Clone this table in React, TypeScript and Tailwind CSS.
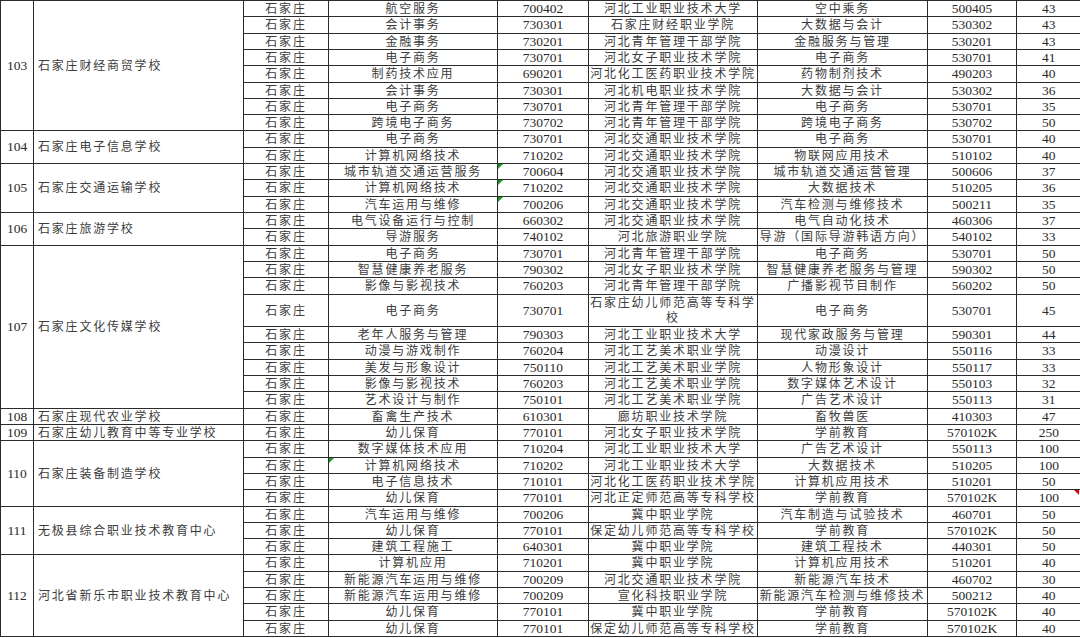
import React from 'react';

type Row = [string, string, string, string, string, string];
type Group = { no: string; name: string; rows: Row[] };

const groups: Group[] = [
  {
    no: '103',
    name: '石家庄财经商贸学校',
    rows: [
      ['航空服务', '700402', '河北工业职业技术大学', '空中乘务', '500405', '43'],
      ['会计事务', '730301', '石家庄财经职业学院', '大数据与会计', '530302', '43'],
      ['金融事务', '730201', '河北青年管理干部学院', '金融服务与管理', '530201', '43'],
      ['电子商务', '730701', '河北女子职业技术学院', '电子商务', '530701', '41'],
      ['制药技术应用', '690201', '河北化工医药职业技术学院', '药物制剂技术', '490203', '40'],
      ['会计事务', '730301', '河北机电职业技术学院', '大数据与会计', '530302', '36'],
      ['电子商务', '730701', '河北青年管理干部学院', '电子商务', '530701', '35'],
      ['跨境电子商务', '730702', '河北青年管理干部学院', '跨境电子商务', '530702', '50'],
    ],
  },
  {
    no: '104',
    name: '石家庄电子信息学校',
    rows: [
      ['电子商务', '730701', '河北交通职业技术学院', '电子商务', '530701', '40'],
      ['计算机网络技术', '710202', '河北交通职业技术学院', '物联网应用技术', '510102', '40'],
    ],
  },
  {
    no: '105',
    name: '石家庄交通运输学校',
    rows: [
      ['城市轨道交通运营服务', '700604', '河北交通职业技术学院', '城市轨道交通运营管理', '500606', '37'],
      ['计算机网络技术', '710202', '河北交通职业技术学院', '大数据技术', '510205', '36'],
      ['汽车运用与维修', '700206', '河北交通职业技术学院', '汽车检测与维修技术', '500211', '35'],
    ],
  },
  {
    no: '106',
    name: '石家庄旅游学校',
    rows: [
      ['电气设备运行与控制', '660302', '河北交通职业技术学院', '电气自动化技术', '460306', '37'],
      ['导游服务', '740102', '河北旅游职业学院', '导游（国际导游韩语方向）', '540102', '33'],
    ],
  },
  {
    no: '107',
    name: '石家庄文化传媒学校',
    rows: [
      ['电子商务', '730701', '河北青年管理干部学院', '电子商务', '530701', '50'],
      ['智慧健康养老服务', '790302', '河北女子职业技术学院', '智慧健康养老服务与管理', '590302', '50'],
      ['影像与影视技术', '760203', '河北青年管理干部学院', '广播影视节目制作', '560202', '50'],
      ['电子商务', '730701', '石家庄幼儿师范高等专科学校', '电子商务', '530701', '45'],
      ['老年人服务与管理', '790303', '河北工业职业技术大学', '现代家政服务与管理', '590301', '44'],
      ['动漫与游戏制作', '760204', '河北工艺美术职业学院', '动漫设计', '550116', '33'],
      ['美发与形象设计', '750110', '河北工艺美术职业学院', '人物形象设计', '550117', '33'],
      ['影像与影视技术', '760203', '河北工艺美术职业学院', '数字媒体艺术设计', '550103', '32'],
      ['艺术设计与制作', '750101', '河北工艺美术职业学院', '广告艺术设计', '550113', '31'],
    ],
  },
  {
    no: '108',
    name: '石家庄现代农业学校',
    rows: [['畜禽生产技术', '610301', '廊坊职业技术学院', '畜牧兽医', '410303', '47']],
  },
  {
    no: '109',
    name: '石家庄幼儿教育中等专业学校',
    rows: [['幼儿保育', '770101', '河北女子职业技术学院', '学前教育', '570102K', '250']],
  },
  {
    no: '110',
    name: '石家庄装备制造学校',
    rows: [
      ['数字媒体技术应用', '710204', '河北工业职业技术大学', '广告艺术设计', '550113', '100'],
      ['计算机网络技术', '710202', '河北工业职业技术大学', '大数据技术', '510205', '100'],
      ['电子信息技术', '710101', '河北化工医药职业技术学院', '计算机应用技术', '510201', '50'],
      ['幼儿保育', '770101', '河北正定师范高等专科学校', '学前教育', '570102K', '100'],
    ],
  },
  {
    no: '111',
    name: '无极县综合职业技术教育中心',
    rows: [
      ['汽车运用与维修', '700206', '冀中职业学院', '汽车制造与试验技术', '460701', '50'],
      ['幼儿保育', '770101', '保定幼儿师范高等专科学校', '学前教育', '570102K', '50'],
      ['建筑工程施工', '640301', '冀中职业学院', '建筑工程技术', '440301', '50'],
    ],
  },
  {
    no: '112',
    name: '河北省新乐市职业技术教育中心',
    rows: [
      ['计算机应用', '710201', '冀中职业学院', '计算机应用技术', '510201', '40'],
      ['新能源汽车运用与维修', '700209', '河北交通职业技术学院', '新能源汽车技术', '460702', '30'],
      ['新能源汽车运用与维修', '700209', '宣化科技职业学院', '新能源汽车检测与维修技术', '500212', '40'],
      ['幼儿保育', '770101', '冀中职业学院', '学前教育', '570102K', '40'],
      ['幼儿保育', '770101', '保定幼儿师范高等专科学校', '学前教育', '570102K', '40'],
    ],
  },
];

// Excel note markers, keyed by row index over the whole sheet
const greenCode = new Set([10, 11, 12]);
const greenMajor = new Set([27]);
const redNum = new Set([29]);
const tallRow = 18;

const heightClass: Record<number, string> = {
  15: 'h-[15px]',
  16: 'h-[16px]',
  17: 'h-[17px]',
  32: 'h-[32px]',
  33: 'h-[33px]',
};

const UNIT = 636 / 39;
const cell = 'border border-[#2b2b2b] p-0 text-center align-middle whitespace-nowrap';
const cn = 'text-[12px] tracking-[1.8px] text-[#3c3c3c]';
const num = 'text-[13.5px] text-[#2a2a2a]';

function GreenMark() {
  return (
    <span className="absolute left-0 top-0 h-0 w-0 border-t-[5px] border-r-[5px] border-t-[#1a9a1a] border-r-transparent" />
  );
}

export default function App() {
  let idx = 0;
  let unit = 0;
  const trs: React.ReactNode[] = [];

  groups.forEach((g) => {
    g.rows.forEach((r, i) => {
      const span = idx === tallRow ? 2 : 1;
      const top = Math.round(unit * UNIT);
      const bottom = Math.round((unit + span) * UNIT);
      const h = heightClass[bottom - top] ?? 'h-[16px]';
      const k = idx;
      trs.push(
        <tr key={k} className={h}>
          {i === 0 && (
            <>
              <td rowSpan={g.rows.length} className={`${cell} ${num}`}>
                {g.no}
              </td>
              <td rowSpan={g.rows.length} className={`${cell} ${cn} !text-left pl-[4px]`}>
                {g.name}
              </td>
            </>
          )}
          <td className={`${cell} ${cn}`}>石家庄</td>
          <td className={`${cell} ${cn} relative`}>
            {greenMajor.has(k) && <GreenMark />}
            {r[0]}
          </td>
          <td className={`${cell} ${num} relative`}>
            {greenCode.has(k) && <GreenMark />}
            {r[1]}
          </td>
          <td className={`${cell} ${cn} ${k === tallRow ? 'leading-[15px] whitespace-normal' : ''}`}>
            {k === tallRow ? (
              <>
                石家庄幼儿师范高等专科学
                <br />校
              </>
            ) : (
              r[2]
            )}
          </td>
          <td className={`${cell} ${cn}`}>{r[3]}</td>
          <td className={`${cell} ${num}`}>{r[4]}</td>
          <td className={`${cell} ${num} relative border-r-0`}>
            {redNum.has(k) && (
              <span className="absolute right-[2px] top-0 h-0 w-0 border-t-[5px] border-l-[5px] border-t-[#e00000] border-l-transparent" />
            )}
            {r[5]}
          </td>
        </tr>
      );
      idx += 1;
      unit += span;
    });
  });

  return (
    <div className="h-[638px] w-[1080px] overflow-hidden bg-white [font-family:'Liberation_Serif','Noto_Sans_CJK_SC',serif]">
      <table className="w-[1080px] table-fixed border-collapse leading-[14px]">
        <colgroup>
          <col className="w-[33px]" />
          <col className="w-[210px]" />
          <col className="w-[85px]" />
          <col className="w-[169px]" />
          <col className="w-[91px]" />
          <col className="w-[169px]" />
          <col className="w-[170px]" />
          <col className="w-[89px]" />
          <col className="w-[64px]" />
        </colgroup>
        <tbody>{trs}</tbody>
      </table>
    </div>
  );
}
